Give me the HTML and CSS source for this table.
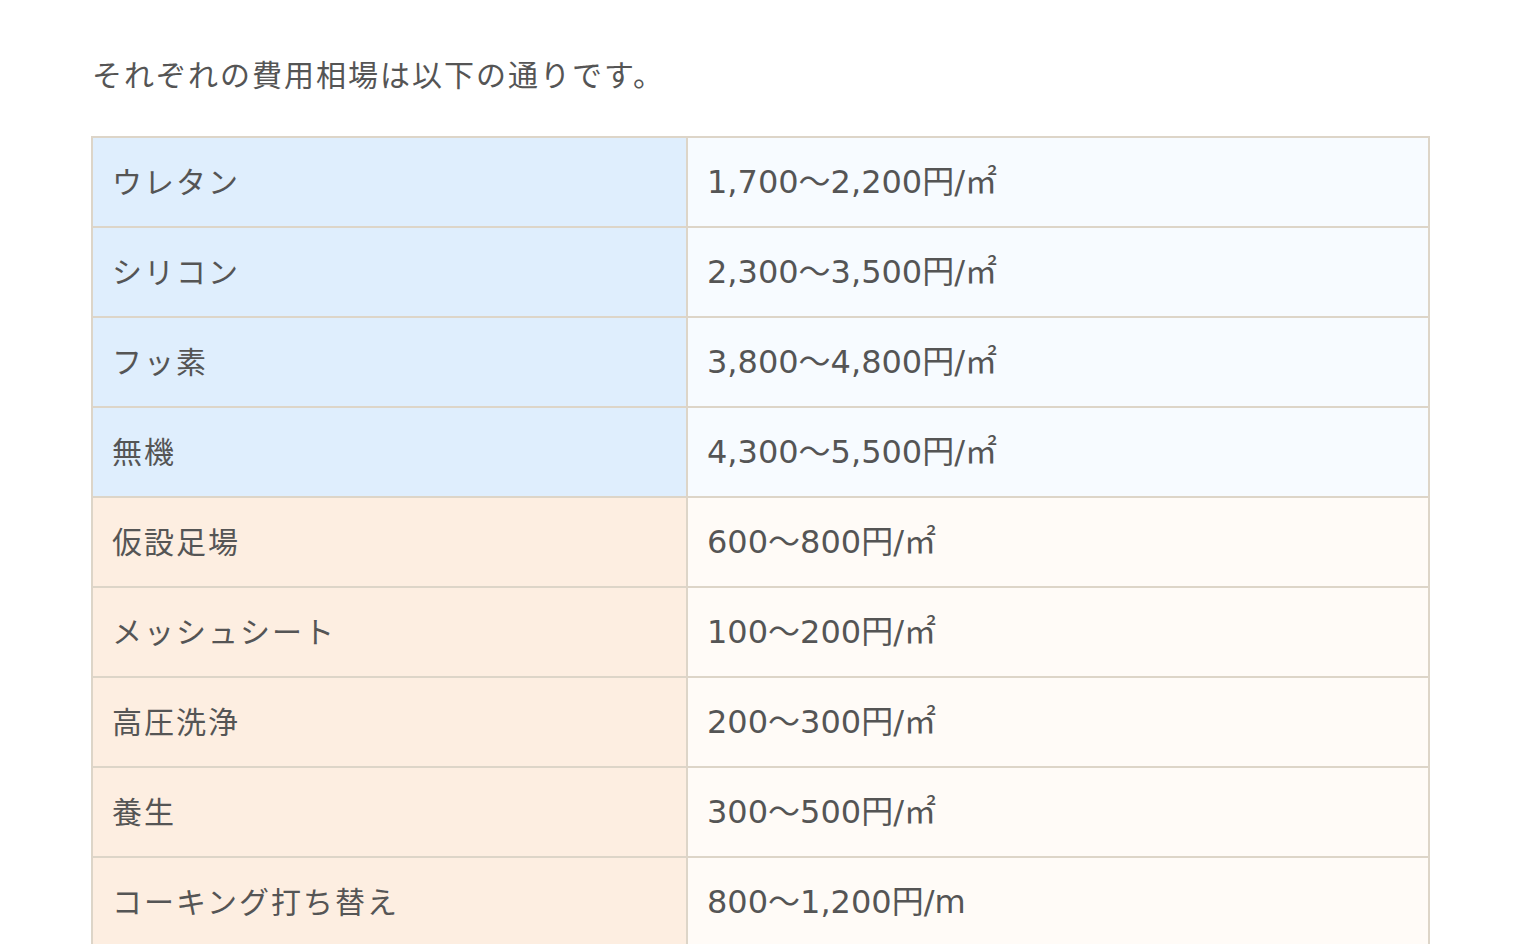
FILE: index.html
```html
<!DOCTYPE html>
<html lang="ja">
<head>
<meta charset="utf-8">
<title>費用相場</title>
<link rel="stylesheet" href="styles.css">
</head>
<body>
<div class="wrap">
  <p class="lead">それぞれの費用相場は以下の通りです。</p>
  <table class="price">
    <colgroup><col class="c1"><col class="c2"></colgroup>
    <tbody>
      <tr class="blue"><th>ウレタン</th><td>1,700～2,200円/㎡</td></tr>
      <tr class="blue"><th>シリコン</th><td>2,300～3,500円/㎡</td></tr>
      <tr class="blue"><th>フッ素</th><td>3,800～4,800円/㎡</td></tr>
      <tr class="blue"><th>無機</th><td>4,300～5,500円/㎡</td></tr>
      <tr class="orange"><th>仮設足場</th><td>600～800円/㎡</td></tr>
      <tr class="orange"><th>メッシュシート</th><td>100～200円/㎡</td></tr>
      <tr class="orange"><th>高圧洗浄</th><td>200～300円/㎡</td></tr>
      <tr class="orange"><th>養生</th><td>300～500円/㎡</td></tr>
      <tr class="orange"><th>コーキング打ち替え</th><td>800～1,200円/m</td></tr>
    </tbody>
  </table>
</div>
</body>
</html>
```
FILE: styles.css
```css
html, body {
  margin: 0;
  padding: 0;
  background: #ffffff;
}
body {
  font-family: "Noto Sans CJK JP", sans-serif;
  color: #555555;
}
.wrap {
  padding: 49px 92px 0 91px;
}
.lead {
  margin: 0 0 39px 1px;
  font-size: 30px;
  line-height: 48px;
  letter-spacing: 2px;
}
.price {
  width: 100%;
  table-layout: fixed;
  border-collapse: collapse;
  border: 2px solid #ddd5c8;
}
.c1 { width: 595px; }
.price th,
.price td {
  border: 2px solid #ddd5c8;
  height: 88px;
  padding: 0 19px;
  font-weight: normal;
  text-align: left;
  vertical-align: middle;
  line-height: 40px;
}
.price th {
  height: 84px;
  font-size: 30px;
  letter-spacing: 2px;
  padding-bottom: 4px;
}
.price td {
  font-family: "DejaVu Sans", "Noto Sans CJK JP", sans-serif;
  font-size: 32px;
  letter-spacing: 0;
}
.blue th { background: #dfeefd; }
.blue td { background: #f7fbff; }
.orange th { background: #fdeee1; }
.orange td { background: #fffbf7; }
```
